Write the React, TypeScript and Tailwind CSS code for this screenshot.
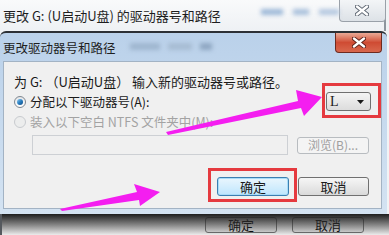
import React from 'react';

const cjk = "font-['Noto_Sans_CJK_SC','Noto_Sans',sans-serif]";
const title = `${cjk} whitespace-nowrap text-[#1e1e1e]`;

function CloseGlyph({ dark }: { dark?: boolean }) {
  return (
    <svg width="14" height="11" viewBox="0 0 14 11">
      <path d="M2 1.5 L12 9.5 M12 1.5 L2 9.5" stroke={dark ? '#5a2018' : '#5b6470'} strokeWidth="4.2" strokeLinecap="round" />
      <path d="M2 1.5 L12 9.5 M12 1.5 L2 9.5" stroke="#ffffff" strokeWidth="2.4" strokeLinecap="round" />
    </svg>
  );
}

function Radio({ checked, disabled }: { checked?: boolean; disabled?: boolean }) {
  return (
    <span
      className={`flex h-[12px] w-[12px] shrink-0 items-center justify-center rounded-full border ${
        disabled ? 'border-[#c8cbcf] bg-[#eceded]' : 'border-[#7f8790] bg-gradient-to-b from-[#e4e6e8] to-[#ffffff]'
      }`}
    >
      {checked && <span className="h-[6px] w-[6px] rounded-full bg-gradient-to-br from-[#8fd0f5] via-[#2a7fc0] to-[#0d4a86]" />}
    </span>
  );
}

export default function App() {
  return (
    <div className="relative h-[235px] w-[389px] overflow-hidden bg-[#f1f3f5]">
      {/* window behind */}
      <div className="flex h-[31px] w-[386px] items-start border-r-2 border-[#8e969e] bg-gradient-to-b from-[#f9fafb] to-[#eef1f4]">
        <span className={`${title} shrink-0 pl-[3px] pt-[7px] text-[13px] leading-[18px]`}>更改 G: (U启动U盘) 的驱动器号和路径</span>
        <div className="ml-[40px] mt-[9px] flex gap-[10px] blur-[2px]">
          <span className="h-[6px] w-[22px] bg-[#9db8d8]" />
          <span className="h-[6px] w-[16px] bg-[#a9c0dc]" />
          <span className="h-[6px] w-[20px] bg-[#b5c8e0]" />
        </div>
        <div className="ml-auto flex h-[22px] w-[47px] shrink-0 items-center justify-center rounded-b-[4px] border border-t-0 border-[#9aa1a9] bg-gradient-to-b from-[#f3f5f7] to-[#dde2e7]">
          <CloseGlyph />
        </div>
      </div>

      {/* front dialog */}
      <div className="w-[387px] rounded-t-[6px] border-t-2 border-[#2c3035] bg-gradient-to-b from-[#bad1ea] to-[#d4e3f2]">
        <div className="flex h-[28px] items-start">
          <span className={`${title} shrink-0 pl-[3px] pt-[6px] text-[12.5px] leading-[18px]`}>更改驱动器号和路径</span>
          <div className="ml-[14px] mt-[10px] flex gap-[8px] blur-[2px]">
            <span className="h-[7px] w-[30px] bg-[#9fb6cf]" />
            <span className="h-[7px] w-[24px] bg-[#a7bcd3]" />
            <span className="h-[7px] w-[12px] bg-[#8fa7c2]" />
          </div>
          <div className="ml-auto mr-[5px] flex h-[20px] w-[47px] shrink-0 items-center justify-center rounded-b-[4px] border border-t-0 border-[#6e2a1f] bg-gradient-to-b from-[#e9a996] via-[#cf4b33] to-[#d8674d]">
            <CloseGlyph dark />
          </div>
        </div>

        <div className={`${cjk} ml-[3px] h-[148px] w-[379px] whitespace-nowrap border border-[#a3b3c4] bg-[#f0f0f0] text-[12.5px] leading-[16px] text-[#1a1a1a]`}>
          <div className="mt-[12px] pl-[10px] text-[13px]">为 G: （U启动U盘） 输入新的驱动器号或路径。</div>

          <div className="mt-[2px] flex h-[19px] items-center pl-[10px] pr-[10px]">
            <Radio checked />
            <span className="ml-[4px]">分配以下驱动器号(A):</span>
            <div className="ml-auto flex h-[19px] w-[45px] items-center justify-between rounded-[3px] border border-[#707070] bg-gradient-to-b from-[#f4f4f4] to-[#dcdcdc] pl-[3px] pr-[6px]">
              <span className="font-['Liberation_Serif',serif] text-[14px]">L</span>
              <svg width="7" height="4" viewBox="0 0 7 4">
                <path d="M0 0 H7 L3.5 4 Z" fill="#1a1a1a" />
              </svg>
            </div>
          </div>

          <div className="mt-[3px] flex h-[16px] items-center pl-[10px] text-[#a3a3a3]">
            <Radio disabled />
            <span className="ml-[4px]">装入以下空白 NTFS 文件夹中(M):</span>
          </div>

          <div className="mt-[5px] flex items-center gap-[9px] pl-[28px]">
            <div className="h-[20px] w-[256px] border border-[#cdd0d4] bg-[#f0f0f0]" />
            <div className="flex h-[17px] w-[72px] items-center justify-center rounded-[3px] border border-[#b8bcc0] bg-[#f4f4f4] text-[12px] text-[#a0a0a0]">
              浏览(B)...
            </div>
          </div>

          <div className="mt-[22px] flex justify-end gap-[9px] pr-[12px] text-[13px]">
            <div className="flex h-[19px] w-[72px] items-center justify-center rounded-[3px] border border-[#3c7fb1] bg-gradient-to-b from-[#eaf6fd] to-[#bee6fd] shadow-[inset_0_0_0_1px_#a8dcf8]">
              确定
            </div>
            <div className="flex h-[19px] w-[71px] items-center justify-center rounded-[3px] border border-[#707070] bg-gradient-to-b from-[#f6f6f6] to-[#dadada]">
              取消
            </div>
          </div>
        </div>
        <div className="h-[5px]" />
      </div>

      {/* back window bottom with shadow */}
      <div className={`${cjk} relative flex h-[21px] border-l-2 border-[#55595e] bg-[#ececec] pl-[203px] pt-[3px] text-[13px] leading-[16px]`}>
        <div className="flex h-[16px] w-[72px] items-center justify-center rounded-[3px] border border-[#707070] bg-[#e6e6e6]">确定</div>
        <div className="ml-[15px] flex h-[16px] w-[72px] items-center justify-center rounded-[3px] border border-[#707070] bg-[#e6e6e6]">取消</div>
        <div className="absolute inset-0 bg-gradient-to-b from-[#1e1e1e] via-[#3a3a3a]/60 to-transparent" />
      </div>

      {/* annotations */}
      <div className="absolute left-[322px] top-[83px] h-[35px] w-[59px] border-[3px] border-[#e53a3f]" />
      <div className="absolute left-[208px] top-[168px] h-[34px] w-[89px] border-[3px] border-[#e53a3f]" />
      <svg className="pointer-events-none absolute left-0 top-0" width="389" height="235" viewBox="0 0 389 235">
        <polygon points="166,132 298,101 296,90 322,97 304,116 301,108 168,135" fill="#f41ef0" />
        <polygon points="60,209 137,192 134,184 160,192 140,206 139,200 62,211" fill="#f41ef0" />
      </svg>
    </div>
  );
}
